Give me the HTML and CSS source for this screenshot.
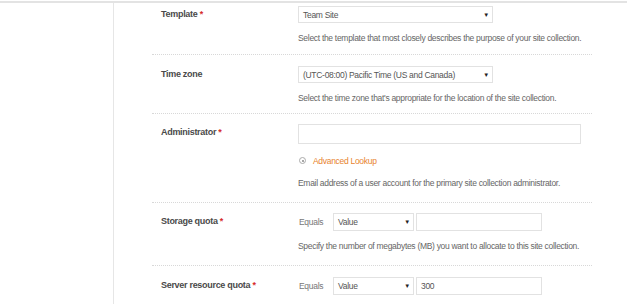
FILE: index.html
```html
<!DOCTYPE html>
<html lang="en">
<head>
    <meta charset="UTF-8">
    <title>New Site Collection</title>
    <link rel="stylesheet" href="styles.css">
</head>
<body>
    <div class="page">
        <div class="sidebar"></div>
        <div class="form">
            <div class="section first">
                <div class="label">Template <span class="req">*</span></div>
                <div class="field">
                    <div class="select wide"><span>Team Site</span><span class="arrow">&#9660;</span></div>
                    <p class="desc">Select the template that most closely describes the purpose of your site collection.</p>
                </div>
            </div>
            <div class="section">
                <div class="label">Time zone</div>
                <div class="field">
                    <div class="select wide"><span>(UTC-08:00) Pacific Time (US and Canada)</span><span class="arrow">&#9660;</span></div>
                    <p class="desc">Select the time zone that's appropriate for the location of the site collection.</p>
                </div>
            </div>
            <div class="section tall">
                <div class="label">Administrator <span class="req">*</span></div>
                <div class="field">
                    <input type="text" class="text-input long">
                    <div class="lookup">
                        <span class="radio"></span>
                        <a href="#" class="lookup-link">Advanced Lookup</a>
                    </div>
                    <p class="desc">Email address of a user account for the primary site collection administrator.</p>
                </div>
            </div>
            <div class="section tall">
                <div class="label">Storage quota <span class="req">*</span></div>
                <div class="field">
                    <div class="quota-row">
                        <span class="equals">Equals</span>
                        <div class="select small"><span>Value</span><span class="arrow">&#9660;</span></div>
                        <input type="text" class="text-input short">
                    </div>
                    <p class="desc">Specify the number of megabytes (MB) you want to allocate to this site collection.</p>
                </div>
            </div>
            <div class="section last">
                <div class="label">Server resource quota <span class="req">*</span></div>
                <div class="field">
                    <div class="quota-row">
                        <span class="equals">Equals</span>
                        <div class="select small"><span>Value</span><span class="arrow">&#9660;</span></div>
                        <input type="text" class="text-input short" value="300">
                    </div>
                </div>
            </div>
        </div>
    </div>
</body>
</html>
```

FILE: styles.css
```css
* { box-sizing: border-box; margin: 0; padding: 0; }
body {
    font-family: 'Liberation Sans', Arial, sans-serif;
    font-size: 8.5px;
    letter-spacing: -0.3px;
    color: #666;
    background: white;
    overflow: hidden;
}
.page {
    display: flex;
    min-height: 304px;
    margin-top: 1px;
    border-top: 2px solid #e3e3e3;
}
.sidebar {
    width: 114px;
    border-right: 1px solid #e6e6e6;
}
.form {
    padding-left: 38px;
}
.section {
    display: flex;
    width: 440px;
    padding: 11px 0 9px;
    border-bottom: 1px dotted #d8d8d8;
}
.section.first { padding-top: 3px; padding-bottom: 10px; }
.section.tall { padding-top: 10px; padding-bottom: 13px; }
.section.last { border-bottom: none; }
.label {
    width: 146px;
    padding-left: 9px;
    padding-top: 3px;
    font-weight: bold;
    font-size: 9px;
    color: #4a4a4a;
}
.req { color: #d62b2b; }
.field { flex: 1; }
.select {
    display: flex;
    justify-content: space-between;
    align-items: center;
    height: 17px;
    padding: 0 3px 0 4px;
    border: 1px solid #e2e2e2;
    color: #555;
    background: white;
}
.select.wide { width: 195px; }
.select.small { width: 81px; height: 18px; }
.arrow { font-size: 6px; color: #222; }
.desc {
    margin-top: 10px;
    line-height: 11px;
    white-space: nowrap;
}
.lookup + .desc { margin-top: 12px; }
.text-input {
    display: block;
    border: 1px solid #e2e2e2;
    font-family: inherit;
    font-size: 8.5px;
    letter-spacing: -0.3px;
    color: #555;
    padding: 0 4px;
    outline: none;
}
.text-input.long { width: 283px; height: 20px; }
.text-input.short { width: 126px; height: 18px; }
.lookup {
    display: flex;
    align-items: center;
    gap: 7px;
    height: 11px;
    margin-top: 11px;
    padding-left: 1px;
}
.radio {
    width: 7px;
    height: 7px;
    border: 1px solid #aaa;
    border-radius: 50%;
    position: relative;
}
.radio::after {
    content: "";
    position: absolute;
    left: 1.5px;
    top: 1.5px;
    width: 2px;
    height: 2px;
    border-radius: 50%;
    background: #888;
}
.lookup-link {
    color: #e8832e;
    text-decoration: none;
}
.quota-row {
    display: flex;
    align-items: center;
    gap: 2px;
}
.equals {
    width: 33px;
    padding-left: 1px;
    color: #777;
}
```
